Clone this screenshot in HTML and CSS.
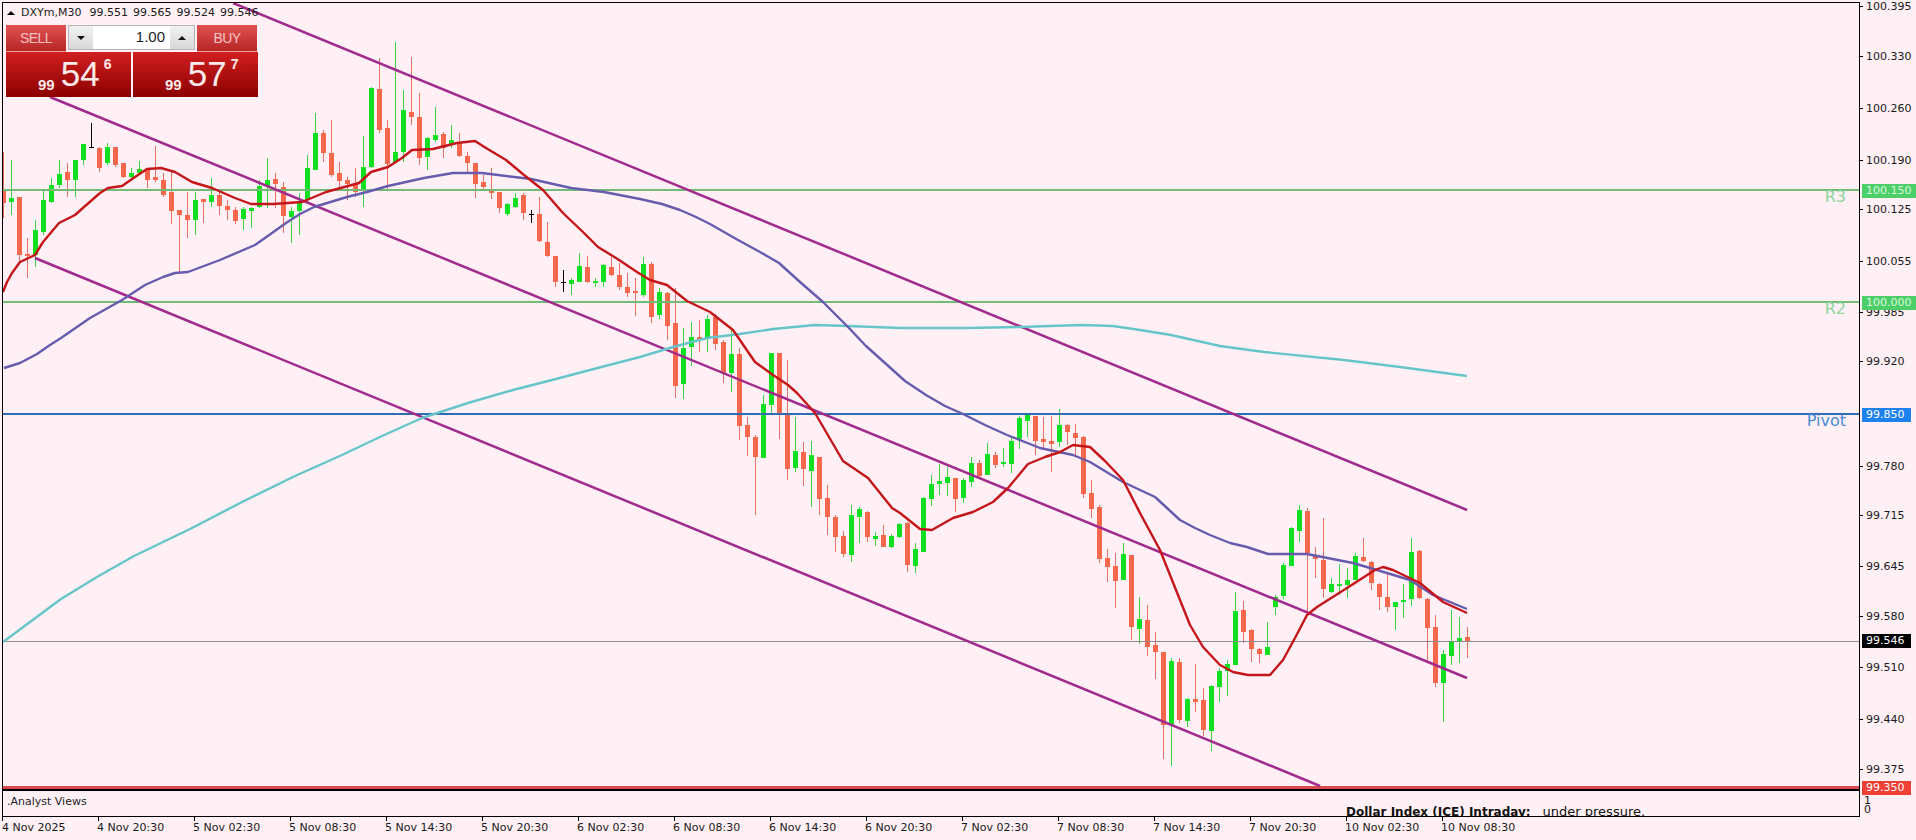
FILE: index.html
```html
<!DOCTYPE html>
<html lang="en">
<head>
<meta charset="utf-8">
<title>DXYm,M30</title>
<link rel="stylesheet" href="styles.css">
</head>
<body>
<div class="terminal">
  <div class="panes">
    <div class="plot-column">
      <section class="main-pane">
        <svg class="chart" viewBox="3 3 1856 786" width="1856" height="786" aria-hidden="true">
          <path class="wick wick-up" d="M11.5 160V215M35.5 220V267M43.5 191V235M51.5 178V203M59.5 160V188M75.5 160V197M83.5 144V165M107.5 143V165M131.5 168V180M139.5 161V175M195.5 192V235M211.5 178V207M243.5 207V230M251.5 207V228M259.5 180V208M267.5 158V208M291.5 207V243M299.5 193V235M307.5 155V202M315.5 113V170M363.5 136V207M371.5 87V168M395.5 42V162M403.5 90V162M427.5 137V170M435.5 107V142M451.5 125V148M507.5 203V216M515.5 193V208M571.5 278V295M579.5 253V282M595.5 278V287M603.5 264V287M643.5 257V297M659.5 288V319M683.5 328V399M691.5 322V366M707.5 315V352M731.5 328V392M763.5 395V458M771.5 353V415M795.5 417V472M811.5 441V507M851.5 505V562M859.5 507V543M875.5 532V546M891.5 534V548M899.5 523V538M915.5 543V573M923.5 497V552M931.5 475V506M939.5 464V495M947.5 467V496M963.5 478V503M971.5 457V487M987.5 443V475M1003.5 448V467M1011.5 437V473M1019.5 416V449M1027.5 415V437M1059.5 409V447M1123.5 543V580M1139.5 597V644M1171.5 658V766M1187.5 698V727M1211.5 685V751M1219.5 668V702M1227.5 660V696M1235.5 592V665M1267.5 622V655M1275.5 595V615M1283.5 563V599M1291.5 527V566M1299.5 505V542M1331.5 578V593M1339.5 564V595M1347.5 568V598M1355.5 553V580M1395.5 602V630M1403.5 584V618M1411.5 538V606M1443.5 650V722M1451.5 610V665M1459.5 617V663"/>
          <path class="wick wick-down" d="M3.5 152V218M19.5 197V263M27.5 238V278M67.5 163V197M99.5 147V172M115.5 147V167M123.5 163V178M147.5 168V188M155.5 146V182M163.5 173V197M171.5 172V224M179.5 210V272M187.5 192V238M203.5 199V223M219.5 190V215M227.5 200V220M235.5 207V224M275.5 173V208M283.5 182V233M323.5 130V162M331.5 120V177M339.5 162V187M347.5 177V200M355.5 168V197M379.5 58V133M387.5 120V190M411.5 57V125M419.5 93V165M443.5 132V158M459.5 133V157M467.5 152V172M475.5 163V198M483.5 175V190M491.5 168V199M499.5 192V213M523.5 193V220M539.5 197V242M547.5 222V257M555.5 256V287M587.5 256V283M611.5 257V276M619.5 263V290M627.5 273V297M635.5 278V316M651.5 262V323M667.5 292V340M675.5 288V398M699.5 320V352M715.5 314V350M723.5 340V383M739.5 348V440M747.5 417V456M755.5 435V515M779.5 353V439M787.5 360V480M803.5 442V486M819.5 457V515M827.5 485V535M835.5 515V552M843.5 531V557M867.5 511V542M883.5 525V547M907.5 522V572M955.5 478V512M979.5 460V478M995.5 452V468M1035.5 416V455M1043.5 417V449M1051.5 416V472M1067.5 424V445M1075.5 424V455M1083.5 436V498M1091.5 480V518M1099.5 505V563M1107.5 549V582M1115.5 553V608M1131.5 555V640M1147.5 605V656M1155.5 632V679M1163.5 652V759M1179.5 658V723M1195.5 664V712M1203.5 688V736M1243.5 601V643M1251.5 629V662M1259.5 648V663M1307.5 508V612M1315.5 547V578M1323.5 518V598M1363.5 538V562M1371.5 561V590M1379.5 583V610M1387.5 573V612M1419.5 550V599M1427.5 598V660M1435.5 615V687M1467.5 627V658"/>
          <path class="wick wick-flat" d="M91.5 123V148M89 147.5H94M531.5 210V223M529 214.5H534M563.5 270V292M561 282.5H566"/>
          <path class="body body-up" d="M11.5 198V202M35.5 230V255M43.5 200V232M51.5 185V202M59.5 174V185M75.5 160V180M83.5 144V160M107.5 147V163M131.5 173V177M139.5 169V173M195.5 200V220M211.5 195V202M243.5 209V219M251.5 208V211M259.5 186V207M267.5 180V186M291.5 211V217M299.5 203V211M307.5 168V200M315.5 133V170M363.5 167V190M371.5 88V167M395.5 152V162M403.5 110V152M427.5 138V157M435.5 135V140M451.5 140V145M507.5 204V214M515.5 198V207M571.5 280V284M579.5 266V282M595.5 281V283M603.5 265V282M643.5 264V295M659.5 292V315M683.5 348V384M691.5 337V347M707.5 319V339M731.5 354V373M763.5 404V458M771.5 353V405M795.5 451V468M811.5 455V471M851.5 515V555M859.5 509V517M875.5 536V539M891.5 536V547M899.5 524V537M915.5 549V566M923.5 498V552M931.5 484V499M939.5 481V484M947.5 477V483M963.5 480V498M971.5 463V482M987.5 454V475M1003.5 462V464M1011.5 441V464M1019.5 418V439M1027.5 415V421M1059.5 425V442M1123.5 554V580M1139.5 619V629M1171.5 661V725M1187.5 699V721M1211.5 686V731M1219.5 671V687M1227.5 664V671M1235.5 611V665M1267.5 647V655M1275.5 597V607M1283.5 565V596M1291.5 528V566M1299.5 510V531M1331.5 584V592M1339.5 584V586M1347.5 580V585M1355.5 556V580M1395.5 602V607M1403.5 600V602M1411.5 552V599M1443.5 654V683M1451.5 641V656M1459.5 638V642"/>
          <path class="body body-down" d="M3.5 190V203M19.5 197V255M27.5 254V256M67.5 172V180M99.5 148V168M115.5 147V165M123.5 163V177M147.5 170V180M155.5 177V180M163.5 180V195M171.5 192V211M179.5 210V215M187.5 215V220M203.5 199V202M219.5 195V206M227.5 206V210M235.5 210V221M275.5 179V184M283.5 187V216M323.5 133V153M331.5 153V175M339.5 173V181M347.5 180V184M355.5 184V192M379.5 89V130M387.5 128V164M411.5 112V117M419.5 117V158M443.5 134V148M459.5 142V156M467.5 156V163M475.5 163V184M483.5 182V187M491.5 189V193M499.5 192V208M523.5 195V213M539.5 214V241M547.5 242V256M555.5 256V282M587.5 267V282M611.5 267V275M619.5 275V287M627.5 287V293M635.5 291V293M651.5 264V317M667.5 293V326M675.5 323V386M699.5 337V340M715.5 317V344M723.5 342V373M739.5 354V426M747.5 425V437M755.5 437V457M779.5 353V413M787.5 414V469M803.5 452V469M819.5 457V499M827.5 498V517M835.5 517V537M843.5 536V554M867.5 512V537M883.5 535V547M907.5 523V565M955.5 478V499M979.5 463V476M995.5 455V465M1035.5 416V441M1043.5 439V442M1051.5 441V444M1067.5 425V432M1075.5 433V438M1083.5 437V494M1091.5 493V509M1099.5 507V559M1107.5 558V567M1115.5 566V581M1131.5 555V627M1147.5 620V647M1155.5 645V652M1163.5 652V725M1179.5 662V720M1195.5 699V702M1203.5 700V730M1243.5 610V632M1251.5 630V649M1259.5 649V654M1307.5 511V553M1315.5 555V559M1323.5 560V589M1363.5 557V561M1371.5 562V583M1379.5 584V597M1387.5 597V607M1419.5 551V598M1427.5 599V628M1435.5 627V683M1467.5 637V641"/>

          <line class="level level-green" x1="3" y1="190" x2="1859" y2="190"/>
          <line class="level level-green" x1="3" y1="302" x2="1859" y2="302"/>
          <line class="level level-pivot" x1="3" y1="414" x2="1859" y2="414"/>
          <line class="level level-price" x1="3" y1="641.5" x2="1859" y2="641.5"/>
          <line class="level level-red" x1="3" y1="787.5" x2="1859" y2="787.5"/>

          <line class="channel" x1="233" y1="3" x2="1467" y2="510"/>
          <line class="channel" x1="50" y1="97" x2="1467" y2="678"/>
          <line class="channel" x1="35" y1="258" x2="1320" y2="786"/>

          <polyline class="ma ma-turquoise" points="3,642 30,622 61,599 97,577 134,556 190,529 244,501 295,476 342,455 382,436 422,418 468,403 513,390 552,380 590,370 640,357 673,347 707,338 740,334 773,329 815,325 848,326 901,328 967,328 1020,327 1081,325 1113,326 1140,330 1171,335 1220,346 1264,352 1344,360 1400,367 1467,376"/>
          <polyline class="ma ma-blue" points="4,368 20,363 37,354 50,345 61,338 90,318 122,300 145,285 163,277 175,273 188,272 220,260 255,245 272,233 286,223 300,214 314,207 347,197 367,192 388,186 424,178 453,173 482,173 531,179 571,188 604,192 640,199 662,204 680,210 696,217 710,224 738,240 760,252 779,263 800,282 823,302 848,327 866,346 885,363 905,381 926,395 945,406 963,414 985,425 1007,435 1040,448 1073,455 1090,462 1123,482 1155,497 1167,508 1180,520 1195,528 1210,535 1230,543 1247,547 1268,554 1307,554 1353,563 1377,570 1410,580 1433,595 1467,609"/>
          <polyline class="ma ma-red" points="3,292 7,282 12,273 20,262 35,255 43,242 59,223 75,215 84,207 100,193 108,188 122,186 135,177 147,169 161,168 175,172 192,182 212,188 235,198 251,204 273,204 302,202 326,192 359,183 371,172 388,167 402,158 412,150 433,149 457,143 475,141 486,148 506,160 524,175 543,190 563,213 584,233 598,247 616,258 637,272 650,280 667,285 687,301 710,312 733,330 755,362 773,375 788,385 797,393 815,413 843,461 868,478 880,493 892,508 900,513 920,529 932,530 953,518 973,512 993,502 1008,488 1028,464 1045,457 1060,452 1073,445 1090,447 1105,461 1123,480 1140,513 1160,550 1170,575 1180,600 1190,625 1203,647 1220,665 1233,672 1248,675 1270,675 1283,660 1295,638 1307,615 1317,607 1347,588 1375,570 1383,567 1393,570 1420,583 1443,602 1467,613"/>

          <text class="level-name name-green" x="1846" y="202">R3</text>
          <text class="level-name name-green" x="1846" y="314">R2</text>
          <text class="level-name name-pivot" x="1846" y="426">Pivot</text>
        </svg>

        <div class="symbol-line">
          <svg class="symbol-arrow" viewBox="0 0 8 4" width="8" height="4" aria-hidden="true"><polygon points="0,4 4,0 8,4"/></svg>
          <span class="symbol-name">DXYm,M30</span>
          <span>99.551</span><span>99.565</span><span>99.524</span><span>99.546</span>
        </div>

        <div class="trade-panel">
          <div class="trade-top">
            <button class="trade-button" type="button">SELL</button>
            <div class="lot-spinner">
              <span class="spin-button"><svg viewBox="0 0 8 4" width="8" height="4" aria-hidden="true"><polygon points="0,0 8,0 4,4"/></svg></span>
              <span class="lot-value">1.00</span>
              <span class="spin-button"><svg viewBox="0 0 8 4" width="8" height="4" aria-hidden="true"><polygon points="0,4 4,0 8,4"/></svg></span>
            </div>
            <button class="trade-button" type="button">BUY</button>
          </div>
          <div class="trade-prices">
            <div class="price-box"><span class="price-head">99</span><span class="price-big">54</span><span class="price-tail">6</span></div>
            <div class="price-box"><span class="price-head">99</span><span class="price-big">57</span><span class="price-tail">7</span></div>
          </div>
        </div>
      </section>

      <section class="sub-pane">
        <span class="sub-name">.Analyst Views</span>
        <p class="sub-note"><strong>Dollar Index (ICE) Intraday:</strong><span>under pressure.</span></p>
      </section>
    </div>

    <aside class="price-axis">
      <span class="tick" style="top:0px">100.395</span>
      <span class="tick" style="top:50px">100.330</span>
      <span class="tick" style="top:102px">100.260</span>
      <span class="tick" style="top:154px">100.190</span>
      <span class="tick" style="top:203px">100.125</span>
      <span class="tick" style="top:255px">100.055</span>
      <span class="tick" style="top:306px">99.985</span>
      <span class="tick" style="top:355px">99.920</span>
      <span class="tick" style="top:460px">99.780</span>
      <span class="tick" style="top:509px">99.715</span>
      <span class="tick" style="top:560px">99.645</span>
      <span class="tick" style="top:610px">99.580</span>
      <span class="tick" style="top:661px">99.510</span>
      <span class="tick" style="top:713px">99.440</span>
      <span class="tick" style="top:763px">99.375</span>
      <span class="tick tick-plain" style="top:796px">1</span>
      <span class="tick tick-plain" style="top:805px">0</span>
      <span class="tag tag-wide tag-green" style="top:184px">100.150</span>
      <span class="tag tag-wide tag-green" style="top:296px">100.000</span>
      <span class="tag tag-blue" style="top:408px">99.850</span>
      <span class="tag tag-black" style="top:634px">99.546</span>
      <span class="tag tag-red" style="top:781px">99.350</span>
    </aside>
  </div>

  <footer class="time-axis">
    <span class="time-label first">4 Nov 2025</span>
    <span class="time-label">4 Nov 20:30</span>
    <span class="time-label">5 Nov 02:30</span>
    <span class="time-label">5 Nov 08:30</span>
    <span class="time-label">5 Nov 14:30</span>
    <span class="time-label">5 Nov 20:30</span>
    <span class="time-label">6 Nov 02:30</span>
    <span class="time-label">6 Nov 08:30</span>
    <span class="time-label">6 Nov 14:30</span>
    <span class="time-label">6 Nov 20:30</span>
    <span class="time-label">7 Nov 02:30</span>
    <span class="time-label">7 Nov 08:30</span>
    <span class="time-label">7 Nov 14:30</span>
    <span class="time-label">7 Nov 20:30</span>
    <span class="time-label">10 Nov 02:30</span>
    <span class="time-label">10 Nov 08:30</span>
  </footer>
</div>
</body>
</html>
```

FILE: styles.css
```css
* { box-sizing: border-box; }

html, body {
  margin: 0;
  height: 100%;
  overflow: hidden;
  background: #fff0f5;
}

body {
  font-family: "DejaVu Sans", sans-serif;
  font-size: 11px;
  color: #111;
}

.terminal {
  width: 1916px;
  height: 840px;
  padding: 2px 0 0 2px;
  display: flex;
  flex-direction: column;
}

.panes {
  display: flex;
  height: 815px;
}

.plot-column {
  width: 1857px;
  height: 815px;
  display: flex;
  flex-direction: column;
  flex: none;
}

/* main chart */
.main-pane {
  position: relative;
  height: 788px;
  border: 1px solid #000;
  border-right: 0;
  overflow: hidden;
}

.chart { display: block; }

.wick { fill: none; stroke-width: 1; shape-rendering: crispEdges; }
.wick-up { stroke: #3fd04a; }
.wick-down { stroke: #e0705f; }
.wick-flat { stroke: #000; }

.body { fill: none; stroke-width: 5; shape-rendering: crispEdges; }
.body-up { stroke: #10e01f; }
.body-down { stroke: #f7674b; }

.level { stroke-width: 2; }
.level-green { stroke: #72bb76; }
.level-pivot { stroke: #2e6db3; }
.level-red { stroke: #d9484b; stroke-width: 3; }
.level-price { stroke: #8c8a8c; stroke-width: 1; }

.channel { stroke: #a12a8c; stroke-width: 2.5; }

.ma { fill: none; stroke-width: 2.4; stroke-linejoin: round; }
.ma-turquoise { stroke: #66c5c9; }
.ma-blue { stroke: #675bae; }
.ma-red { stroke: #c4161a; }

.level-name {
  font-family: "DejaVu Sans", sans-serif;
  font-size: 16px;
  text-anchor: end;
}
.name-green { fill: #8dd69c; }
.name-pivot { fill: #4a8cd6; }

/* symbol line */
.symbol-line {
  position: absolute;
  left: 4px;
  top: 3px;
  display: flex;
  align-items: center;
  gap: 5px;
  line-height: 14px;
  white-space: nowrap;
  color: #1a1a1a;
}
.symbol-arrow { fill: #000; margin-right: 1px; }
.symbol-name { margin-right: 3px; }

/* one click trading */
.trade-panel {
  position: absolute;
  left: 3px;
  top: 22px;
  width: 252px;
  height: 73px;
  display: flex;
  flex-direction: column;
  font-family: "Liberation Sans", sans-serif;
}

.trade-top {
  display: flex;
  height: 27px;
  gap: 2px;
}

.trade-button {
  width: 60px;
  height: 27px;
  padding: 0;
  border: 0;
  border-bottom: 1px solid #e8a0a0;
  background: linear-gradient(#e05252, #b82626);
  color: #f6c4c4;
  font: 14px "Liberation Sans", sans-serif;
  letter-spacing: -0.6px;
}

.lot-spinner {
  width: 127px;
  height: 25px;
  display: flex;
  border: 1px solid #b4b4b4;
  background: #fff;
}

.spin-button {
  width: 24px;
  display: flex;
  align-items: center;
  justify-content: center;
  background: linear-gradient(#f2f2f2, #d8d8d8);
  fill: #111;
}

.lot-value {
  flex: 1;
  padding-right: 5px;
  text-align: right;
  font-size: 15px;
  line-height: 22px;
  color: #222;
}

.trade-prices {
  display: flex;
  gap: 2px;
  height: 45px;
}

.price-box {
  flex: 1;
  display: flex;
  align-items: flex-start;
  padding-left: 32px;
  background: linear-gradient(#d01f1f, #8c0000);
  color: #fbeaea;
}

.price-head {
  margin-top: 25px;
  margin-right: 6px;
  font-size: 15px;
  font-weight: 700;
  line-height: 15px;
}

.price-big {
  margin-top: 3px;
  font-size: 35px;
  line-height: 38px;
}

.price-tail {
  margin-top: 5px;
  margin-left: 4px;
  font-size: 14px;
  font-weight: 700;
  line-height: 15px;
}

/* indicator sub window */
.sub-pane {
  position: relative;
  height: 27px;
  border: 1px solid #000;
  border-right: 0;
  overflow: hidden;
}

.sub-name {
  position: absolute;
  left: 4px;
  top: 4px;
  line-height: 14px;
  color: #222;
}

.sub-note {
  position: absolute;
  left: 1343px;
  top: 14px;
  margin: 0;
  display: flex;
  align-items: baseline;
  gap: 12px;
  line-height: 14px;
  font-size: 13px;
  white-space: nowrap;
  color: #111;
}
.sub-note strong { font-size: 12px; font-weight: 700; }

/* price scale */
.price-axis {
  position: relative;
  width: 57px;
  height: 815px;
  flex: none;
  border-left: 1px solid #000;
}

.tick {
  position: absolute;
  left: 0;
  height: 14px;
  margin-top: -2px;
  padding-left: 6px;
  line-height: 14px;
  color: #1a1a1a;
  background: linear-gradient(#000, #000) no-repeat 0 6px / 3px 1px;
}
.tick-plain {
  height: 9px;
  padding-left: 4px;
  line-height: 9px;
  background: none;
}

.tag {
  position: absolute;
  left: 2px;
  height: 14px;
  width: 49px;
  margin-top: -2px;
  padding-left: 4px;
  line-height: 14px;
  color: #fff;
}
.tag-wide { width: 55px; }
.tag-green { background: #4ccf68; color: #d8f8dc; }
.tag-blue { background: #1e82ee; }
.tag-black { background: #000; }
.tag-red { background: #ee4035; }

/* time scale */
.time-axis {
  display: flex;
  height: 23px;
  margin-left: -2px;
  padding-left: 2px;
  color: #1a1a1a;
}

.time-label {
  width: 96px;
  flex: none;
  padding-top: 4px;
  line-height: 14px;
  white-space: nowrap;
  background: linear-gradient(#000, #000) no-repeat 0 0 / 1px 4px;
}
.time-label:not(.first) { text-indent: -1px; }
```
